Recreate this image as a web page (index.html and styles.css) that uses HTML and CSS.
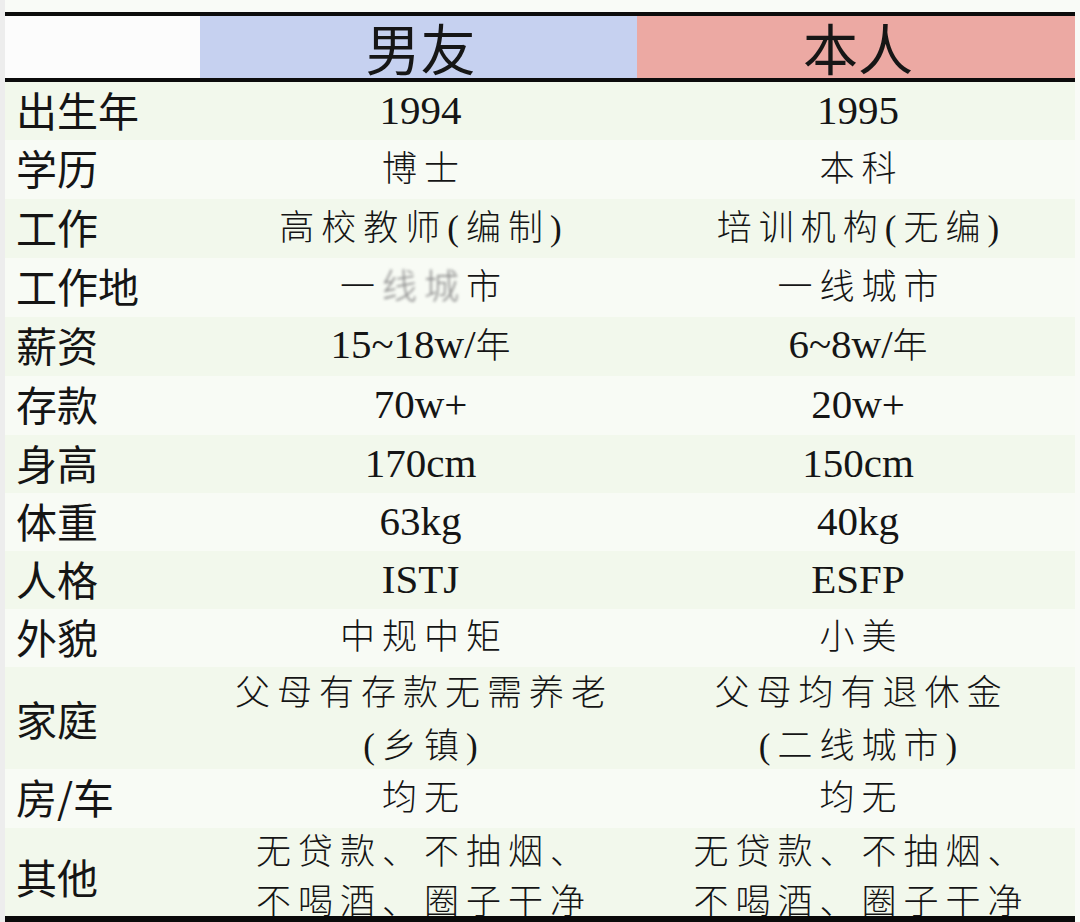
FILE: index.html
```html
<!DOCTYPE html>
<html lang="zh-CN">
<head>
<meta charset="utf-8">
<title>男友 / 本人</title>
<link rel="stylesheet" href="styles.css">
</head>
<body>
<div class="sheet">
  <div class="table">
    <div class="row head">
      <div class="label blank"></div>
      <div class="hcell blue"><span class="htext">男友</span></div>
      <div class="hcell pink"><span class="htext">本人</span></div>
    </div>
    <div class="row g h58">
      <div class="label">出生年</div>
      <div class="val">1994</div>
      <div class="val">1995</div>
    </div>
    <div class="row w h59">
      <div class="label">学历</div>
      <div class="val"><span class="cn">博士</span></div>
      <div class="val"><span class="cn">本科</span></div>
    </div>
    <div class="row g h59">
      <div class="label">工作</div>
      <div class="val"><span class="cn">高校教师(编制)</span></div>
      <div class="val"><span class="cn">培训机构(无编)</span></div>
    </div>
    <div class="row w h59">
      <div class="label">工作地</div>
      <div class="val"><span class="cn">一<span class="blur">线城</span>市</span></div>
      <div class="val"><span class="cn">一线城市</span></div>
    </div>
    <div class="row g h59">
      <div class="label">薪资</div>
      <div class="val">15~18w/<span class="cn">年</span></div>
      <div class="val">6~8w/<span class="cn">年</span></div>
    </div>
    <div class="row w h59">
      <div class="label">存款</div>
      <div class="val">70w+</div>
      <div class="val">20w+</div>
    </div>
    <div class="row g h58">
      <div class="label">身高</div>
      <div class="val">170cm</div>
      <div class="val">150cm</div>
    </div>
    <div class="row w h58">
      <div class="label">体重</div>
      <div class="val">63kg</div>
      <div class="val">40kg</div>
    </div>
    <div class="row g h58">
      <div class="label">人格</div>
      <div class="val">ISTJ</div>
      <div class="val">ESFP</div>
    </div>
    <div class="row w h58">
      <div class="label">外貌</div>
      <div class="val"><span class="cn">中规中矩</span></div>
      <div class="val"><span class="cn">小美</span></div>
    </div>
    <div class="row g family">
      <div class="label">家庭</div>
      <div class="val multi"><span class="cn">父母有存款无需养老</span><span class="cn">(乡镇)</span></div>
      <div class="val multi"><span class="cn">父母均有退休金</span><span class="cn">(二线城市)</span></div>
    </div>
    <div class="row w h59">
      <div class="label">房/车</div>
      <div class="val"><span class="cn">均无</span></div>
      <div class="val"><span class="cn">均无</span></div>
    </div>
    <div class="row g other">
      <div class="label">其他</div>
      <div class="val multi top"><span class="cn">无贷款、不抽烟、</span><span class="cn">不喝酒、圈子干净</span></div>
      <div class="val multi top"><span class="cn">无贷款、不抽烟、</span><span class="cn">不喝酒、圈子干净</span></div>
    </div>
  </div>
</div>
</body>
</html>
```

FILE: styles.css
```css
* {
  box-sizing: border-box;
}

html, body {
  margin: 0;
  padding: 0;
  width: 1080px;
  height: 922px;
  overflow: hidden;
  background: #ededed;
}

.sheet {
  margin-left: 5px;
  width: 1075px;
  height: 922px;
  background: #f9fbf7;
  padding-top: 12px;
}

.table {
  width: 1070px;
  border-top: 4px solid #0c0c0c;
  border-bottom: 6px solid #0a0a0a;
  color: #151515;
  height: 910px;
  overflow: hidden;
}

.row {
  display: grid;
  grid-template-columns: 195px 437px 438px;
  align-items: center;
}

.row.g {
  background: #f2f8ec;
}

.row.w {
  background: #f8fbf5;
}

.row.head {
  height: 66px;
  border-bottom: 4px solid #0c0c0c;
  align-items: stretch;
}

.h58 { height: 58px; }
.h59 { height: 59px; }
.family { height: 102px; }
.other { height: 88px; }

.label {
  padding-left: 11px;
  padding-bottom: 5px;
  font-family: "Noto Sans CJK SC", "Noto Sans", sans-serif;
  font-size: 41px;
  line-height: 50px;
  white-space: nowrap;
}

.label.blank {
  background: #fcfcfc;
  padding: 0;
}

.hcell {
  display: flex;
  align-items: center;
  justify-content: center;
  padding-left: 4px;
  padding-bottom: 2px;
  font-family: "Noto Sans CJK SC", "Noto Sans", sans-serif;
  font-size: 55px;
  color: #161616;
}

.htext {
  line-height: 56px;
}

.hcell.blue {
  background: #c6d1f0;
}

.hcell.pink {
  background: #eca9a3;
}

.val {
  text-align: center;
  padding-left: 4px;
  padding-bottom: 3px;
  font-family: "Liberation Serif", "Noto Sans CJK SC", serif;
  font-size: 41px;
  line-height: 50px;
  white-space: nowrap;
}

.cn {
  font-family: "Liberation Serif", "Noto Sans CJK SC", serif;
  font-size: 35px;
  font-weight: 300;
  letter-spacing: 7px;
  margin-right: -7px;
}

.multi {
  display: flex;
  flex-direction: column;
  align-items: center;
  padding-bottom: 0;
}

.family .multi .cn {
  line-height: 53px;
}

.other .multi {
  align-self: start;
}

.other .multi .cn {
  line-height: 50px;
}

.blur {
  color: #8a8a8a;
  filter: blur(1.4px);
}
```
